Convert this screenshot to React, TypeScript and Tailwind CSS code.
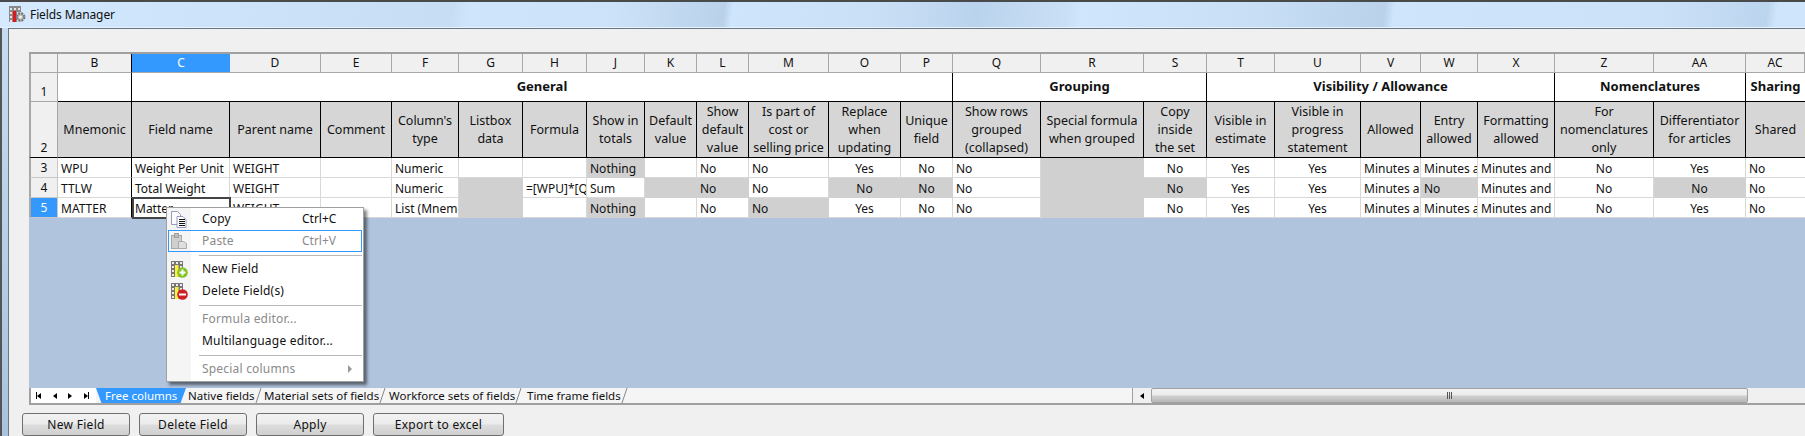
import React from "react";

const font = "font-['Noto_Sans',sans-serif]";

type Cell = { t?: string; g?: boolean; c?: boolean };
const L = (t: string): Cell => ({ t });
const C = (t: string): Cell => ({ t, c: true });
const G: Cell = { g: true };
const E: Cell = {};
const GT = (t: string): Cell => ({ t, g: true });
const GC = (t: string): Cell => ({ t, g: true, c: true });

const letters = ["B","C","D","E","F","G","H","J","K","L","M","O","P","Q","R","S","T","U","V","W","X","Z","AA","AC"];
const headers = ["Mnemonic","Field name","Parent name","Comment","Column's type","Listbox data","Formula","Show in totals","Default value","Show default value","Is part of cost or selling price","Replace when updating","Unique field","Show rows grouped (collapsed)","Special formula when grouped","Copy inside the set","Visible in estimate","Visible in progress statement","Allowed","Entry allowed","Formatting allowed","For nomenclatures only","Differentiator for articles","Shared"];
const rows: Cell[][] = [
  [L("WPU"),L("Weight Per Unit"),L("WEIGHT"),E,L("Numeric"),E,E,GT("Nothing"),E,L("No"),L("No"),C("Yes"),C("No"),L("No"),G,C("No"),C("Yes"),C("Yes"),L("Minutes and hours"),L("Minutes and hours"),L("Minutes and hours"),C("No"),C("Yes"),L("No")],
  [L("TTLW"),L("Total Weight"),L("WEIGHT"),E,L("Numeric"),G,L("=[WPU]*[QTY]"),L("Sum"),G,GT("No"),L("No"),GC("No"),GC("No"),L("No"),G,GC("No"),C("Yes"),C("Yes"),L("Minutes and hours"),GT("No"),L("Minutes and hours"),C("No"),GC("No"),L("No")],
  [L("MATTER"),L("Matter"),L("WEIGHT"),E,L("List (Mnemonic)"),G,E,GT("Nothing"),E,L("No"),GT("No"),C("Yes"),C("No"),L("No"),G,C("No"),C("Yes"),C("Yes"),L("Minutes and hours"),L("Minutes and hours"),L("Minutes and hours"),C("No"),C("Yes"),L("No")],
];

function TitleIcon() {
  return (
    <svg width="17" height="17" viewBox="0 0 17 17">
      <rect x="0" y="0" width="12" height="16" fill="#8a8a8a" />
      <path d="M1 2h2v2H1zM5 2h2v2H5zM9 2h2v2H9zM1 6h2v2H1zM1 10h2v2H1zM1 14h2v2H1z" fill="#e4e4e4" />
      <rect x="4" y="5" width="3" height="11" fill="#e0161c" />
      <path d="M8 6h4v10H8z" fill="#dcdcdc" />
      <circle cx="11.5" cy="11" r="3.8" fill="#b4b4b4" stroke="#777" strokeWidth="2.2" strokeDasharray="2 1" />
      <circle cx="11.5" cy="11" r="1.6" fill="#f2f2f2" />
    </svg>
  );
}

function GridIcon({ add }: { add: boolean }) {
  return (
    <svg width="17" height="17" viewBox="0 0 17 17">
      <rect x="0" y="0" width="12" height="16" fill="#777" />
      <path d="M1 1h2v2H1zM5 1h2v2H5zM9 1h2v2H9zM1 5h2v2H1zM1 9h2v2H1zM1 13h2v2H1zM9 5h2v2H9z" fill="#eeeeee" />
      <rect x="4" y="4" width="3.5" height="12" fill="#fbf03a" />
      <circle cx="11.5" cy="11.5" r="5.3" fill={add ? "#84c225" : "#cc1f26"} />
      {add ? <path d="M8.5 11.5h6M11.5 8.5v6" stroke="#fff" strokeWidth="2" /> : <path d="M8 11.5h7" stroke="#fff" strokeWidth="2" />}
    </svg>
  );
}

function CopyIcon() {
  return (
    <svg width="17" height="17" viewBox="0 0 17 17">
      <path d="M0.5 0.5h6l3 3v10h-9z" fill="#fbfbfd" stroke="#9a9ac0" />
      <path d="M6 5.5h6l3 3v8h-9z" fill="#fff" stroke="#9a9ac0" />
      <path d="M8 8.5h6M8 10.5h6M8 12.5h6M8 14.5h6" stroke="#111" />
    </svg>
  );
}

function PasteIcon() {
  return (
    <svg width="17" height="17" viewBox="0 0 17 17">
      <rect x="0.5" y="2.5" width="10" height="13" fill="#cfcfcf" stroke="#a8a8a8" />
      <rect x="3.5" y="0.5" width="4" height="4" fill="#bdbdbd" stroke="#a0a0a0" />
      <path d="M7.5 8.5h5l3 2v5h-8z" fill="#dedede" stroke="#aaa" />
    </svg>
  );
}

function Sep() {
  return <div className="relative h-px bg-[#b8b8b8] ml-[32px] mr-px" />;
}

function MenuItem({ icon, label, shortcut, disabled, hover, arrow }: { icon?: React.ReactNode; label: string; shortcut?: string; disabled?: boolean; hover?: boolean; arrow?: boolean }) {
  return (
    <div className={`h-[22px] mx-px flex items-center border ${hover ? "border-[#3399ff]" : "border-transparent"} ${disabled ? "text-[#8a8a8a]" : "text-[#111]"}`}>
      <div className="w-[24px] pl-[2px] flex items-center">{icon}</div>
      <div className="w-[109px] pl-[9px] whitespace-nowrap tracking-[0.2px]">{label}</div>
      {shortcut && <div className="whitespace-nowrap">{shortcut}</div>}
      {arrow && <div className="ml-auto mr-[9px] w-0 h-0 border-y-[4px] border-y-transparent border-l-[4px] border-l-[#999]" />}
    </div>
  );
}

function ContextMenu() {
  return (
    <div className="absolute left-[166px] top-[207px] w-[198px] h-[175px] bg-white border border-[#a0a0a0] shadow-[3px_3px_3px_rgba(0,0,0,0.5)] text-[12px] z-10">
      <div className="absolute left-0 top-0 bottom-0 w-[24px] bg-[#f5f5f5]" />
      <div className="relative flex flex-col">
        <MenuItem icon={<CopyIcon />} label="Copy" shortcut="Ctrl+C" />
        <MenuItem icon={<PasteIcon />} label="Paste" shortcut="Ctrl+V" disabled hover />
        <div className="h-[3px]" />
        <Sep />
        <div className="h-[2px]" />
        <MenuItem icon={<GridIcon add />} label="New Field" />
        <MenuItem icon={<GridIcon add={false} />} label="Delete Field(s)" />
        <div className="h-[3px]" />
        <Sep />
        <div className="h-[2px]" />
        <MenuItem label="Formula editor..." disabled />
        <MenuItem label="Multilanguage editor..." />
        <div className="h-[3px]" />
        <Sep />
        <div className="h-[2px]" />
        <MenuItem label="Special columns" disabled arrow />
      </div>
    </div>
  );
}

function Sheet() {
  return (
    <div className="border-t-2 border-[#a0a0a0] grid grid-cols-[29px_74px_98px_91px_71px_67px_64px_64px_58px_52px_52px_80px_72px_52px_88px_103px_63px_68px_86px_60px_57px_77px_99px_92px_59px] grid-rows-[19px_29px_56px_20px_20px_20px] text-[#111] bg-white relative">
      <div className="bg-[#f0f0f0] border-l-2 border-r border-b border-[#a8a8a8]" />
      {letters.map((l) => (
        <div key={l} className={`flex items-center justify-center text-[12px] border-b ${l === "C" ? "bg-[#3399ff] text-white border-[#a8a8a8]" : "bg-[#f0f0f0] border-r border-[#a8a8a8]"} ${l === "B" ? "border-r-black" : ""}`}>{l}</div>
      ))}
      <div className="bg-[#f0f0f0] border-l-2 border-l-[#a8a8a8] border-r border-b border-[#a8a8a8] flex items-end justify-center text-[12px]">1</div>
      <div className="border-r border-b border-black" />
      <div className="col-span-12 border-r border-b border-black flex items-center justify-center font-bold text-[13px]">General</div>
      <div className="col-span-3 border-r border-b border-black flex items-center justify-center font-bold text-[13px]">Grouping</div>
      <div className="col-span-5 border-r border-b border-black flex items-center justify-center font-bold text-[13px]">Visibility / Allowance</div>
      <div className="col-span-2 border-r border-b border-black flex items-center justify-center font-bold text-[13px]">Nomenclatures</div>
      <div className="border-b border-black flex items-center justify-center font-bold text-[13px]">Sharing</div>
      <div className="bg-[#f0f0f0] border-l-2 border-l-[#a8a8a8] border-r border-r-[#a8a8a8] border-b border-b-black flex items-end justify-center text-[12px]">2</div>
      {headers.map((h, i) => (
        <div key={h} className={`bg-[#d6d6d6] border-b border-black flex items-center justify-center text-center text-[12.5px] leading-[18px] px-[3px] ${i === headers.length - 1 ? "" : "border-r"}`}>{h}</div>
      ))}
      {rows.map((r, ri) => (
        <React.Fragment key={ri}>
          <div className={`flex items-center justify-center text-[12px] border-l-2 border-l-[#a8a8a8] border-r border-b border-[#c8c8c8] ${ri === 2 ? "bg-[#3399ff] text-white" : "bg-[#f0f0f0]"}`}>{ri + 3}</div>
          {r.map((c, ci) => (
            <div key={ci} className={`flex items-center overflow-hidden whitespace-nowrap text-[12px] px-[3px] pt-[3px] border-b ${ci === 23 ? "" : "border-r"} ${c.g ? "bg-[#d0d0d0] border-[#d0d0d0]" : "border-[#d8d8d8]"} ${ci === 0 ? "border-r-black" : ""} ${c.c ? "justify-center" : ""}`}>{c.t}</div>
          ))}
        </React.Fragment>
      ))}
      <div className="absolute left-[103px] top-[143px] w-[99px] h-[22px] border-2 border-[#444]" />
    </div>
  );
}

function Slash() {
  return (
    <svg width="7" height="15" viewBox="0 0 7 15" className="shrink-0">
      <path d="M6 0L1 15" stroke="#888" strokeWidth="1" />
    </svg>
  );
}

function Tab({ label, cls }: { label: string; cls: string }) {
  return (
    <div className={`${cls} h-full flex items-center justify-between whitespace-nowrap`}>
      <span className="pt-px">{label}</span>
      <Slash />
    </div>
  );
}

function TabBar() {
  return (
    <div className="h-[17px] bg-[#f5f5f5] border-b-2 border-b-[#a0a0a0] border-l-2 border-l-[#a0a0a0] flex items-center text-[11.5px] text-[#111]">
      <div className="w-[65px] flex items-center justify-between pl-[5px] pr-[7px] bg-white h-full">
        <span className="flex items-center"><span className="w-px h-[7px] bg-black" /><span className="w-0 h-0 border-y-[3.5px] border-y-transparent border-r-[4px] border-r-black" /></span>
        <span className="w-0 h-0 border-y-[3.5px] border-y-transparent border-r-[4px] border-r-black" />
        <span className="w-0 h-0 border-y-[3.5px] border-y-transparent border-l-[4px] border-l-black" />
        <span className="flex items-center"><span className="w-0 h-0 border-y-[3.5px] border-y-transparent border-l-[4px] border-l-black" /><span className="w-px h-[7px] bg-black" /></span>
      </div>
      <div className="w-[1036px] flex items-center h-full">
        <div className="bg-[#3399ff] text-white h-full flex items-center pl-[9px] pt-px w-[90px] shrink-0 [clip-path:polygon(0_0,100%_0,94%_100%,6%_100%)] whitespace-nowrap">Free columns</div>
        <Tab cls="w-[73px] pl-[2px]" label="Native fields" />
        <Tab cls="w-[125px] pl-[5px]" label="Material sets of fields" />
        <Tab cls="w-[138px] pl-[5px]" label="Workforce sets of fields" />
        <Tab cls="w-[106px] pl-[5px]" label="Time frame fields" />
      </div>
      <div className="flex-1 h-full bg-[#f0f0f0] flex items-center border-l border-[#a0a0a0]">
        <div className="w-[18px] flex justify-center"><span className="w-0 h-0 border-y-[3.5px] border-y-transparent border-r-[4px] border-r-black" /></div>
        <div className="w-[597px] h-[15px] rounded-[2px] border border-[#a0a0a0] bg-[linear-gradient(#f2f2f2_0%,#ebebeb_45%,#cfcfcf_55%,#b8b8b8_100%)] flex items-center justify-center gap-px">
          <span className="w-px h-[7px] bg-[#555]" /><span className="w-px h-[7px] bg-[#555]" /><span className="w-px h-[7px] bg-[#555]" />
        </div>
      </div>
    </div>
  );
}

function Btn({ label, cls }: { label: string; cls: string }) {
  return (
    <div className={`${cls} h-[23px] rounded-[3px] border border-[#707070] bg-[linear-gradient(#f2f2f2_0%,#ebebeb_48%,#dddddd_52%,#cfcfcf_100%)] flex items-center justify-center text-[12px] tracking-[0.3px] text-[#111]`}>{label}</div>
  );
}

export default function App() {
  return (
    <div className={`relative w-[1805px] h-[436px] overflow-hidden flex flex-col ${font}`}>
      <div className="h-[28px] shrink-0 border-t-2 border-t-[#4a4a4a] border-b border-b-[#e6f2fd] bg-[linear-gradient(97deg,#d6eafe_0px,#d0e6fc_100px,#c6ddf4_450px,#cfe5fb_466px,#cce2f8_610px,#b9d2ea_720px,#cfe5fb_728px,#c9dff6_875px,#bad3ec_970px,#c9dff6_1060px,#d0e6fc_1075px,#c7def5_1255px,#b9d2ea_1375px,#cfe5fb_1385px,#cbe1f8_1645px,#bcd5ee_1755px,#cfe5fb_1765px,#cfe5fb_1805px)] flex items-center pl-[9px] gap-[4px] text-[12px] tracking-[-0.1px] text-[#111]">
        <TitleIcon />
        <span>Fields Manager</span>
      </div>
      <div className="flex-1 flex min-h-0">
        <div className="w-[8px] border-l-2 border-l-[#555] bg-[linear-gradient(#c6dcf2,#a9c3dc)]" />
        <div className="flex-1 min-w-0 bg-[#f0f0f0] border-t border-l border-[#6b7884] pt-[23px] pl-[20px] flex flex-col">
          <Sheet />
          <div className="h-[170px] bg-[#b0c4de]" />
          <TabBar />
          <div className="flex gap-[9px] mt-[8px] -ml-[7px]">
            <Btn label="New Field" cls="w-[108px]" />
            <Btn label="Delete Field" cls="w-[108px]" />
            <Btn label="Apply" cls="w-[108px]" />
            <Btn label="Export to excel" cls="w-[131px]" />
          </div>
        </div>
      </div>
      <ContextMenu />
    </div>
  );
}
